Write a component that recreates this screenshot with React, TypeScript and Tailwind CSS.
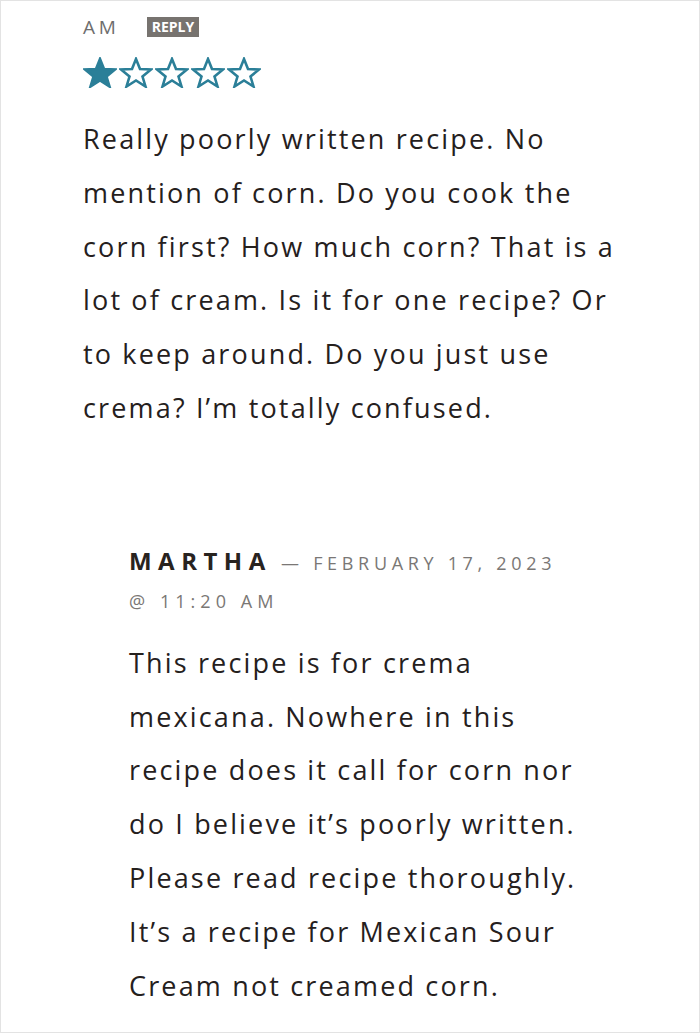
const Star = ({ filled }: { filled: boolean }) => (
  <svg width="34" height="31" viewBox="0 0 34 31" className="shrink-0">
    <path
      d="M17 2 L21 12 L32 12.5 L23.5 19.5 L26.5 29.5 L17 23.5 L7.5 29.5 L10.5 19.5 L2 12.5 L13 12 Z"
      fill={filled ? "#2b7f98" : "none"}
      stroke="#2b7f98"
      strokeWidth="2.6"
      strokeLinejoin="miter"
    />
  </svg>
);

const commentLines = [
  "Really poorly written recipe. No",
  "mention of corn. Do you cook the",
  "corn first? How much corn? That is a",
  "lot of cream. Is it for one recipe? Or",
  "to keep around. Do you just use",
  "crema? I\u2019m totally confused.",
];

const replyLines = [
  "This recipe is for crema",
  "mexicana. Nowhere in this",
  "recipe does it call for corn nor",
  "do I believe it\u2019s poorly written.",
  "Please read recipe thoroughly.",
  "It\u2019s a recipe for Mexican Sour",
  "Cream not creamed corn.",
];

export default function App() {
  return (
    <div className="w-[700px] h-[1033px] bg-white border border-[#e3e3e3] overflow-hidden font-['Open_Sans',sans-serif] text-[#25201d]">
      <div className="pl-[82px] pt-[12px]">
        <div className="flex items-center h-[28px]">
          <span className="text-[19px] tracking-[0.2em] text-[#6e6e6e]">AM</span>
          <span className="ml-[27px] bg-[#77736f] text-white text-[14px] font-bold leading-none px-[5px] py-[3px]">
            REPLY
          </span>
        </div>
        <div className="flex gap-[2px] mt-[16px]">
          {[true, false, false, false, false].map((f, i) => (
            <Star key={i} filled={f} />
          ))}
        </div>
        <div className="mt-[24px] text-[27px] leading-[53.8px] tracking-[0.08em]">
          {commentLines.map((l) => (
            <div key={l}>{l}</div>
          ))}
        </div>
        <div className="pl-[46px] mt-[107px]">
          <div className="text-[18px] leading-[38px] tracking-[0.26em] text-[#7a7775]">
            <span className="font-bold text-[#28231f] text-[24px] tracking-[0.27em]">MARTHA</span>
            <span> — FEBRUARY 17, 2023</span>
            <div className="tracking-[0.28em]">@ 11:20 AM</div>
          </div>
          <div className="mt-[16px] text-[27px] leading-[53.8px] tracking-[0.08em]">
            {replyLines.map((l) => (
              <div key={l}>{l}</div>
            ))}
          </div>
        </div>
      </div>
    </div>
  );
}
